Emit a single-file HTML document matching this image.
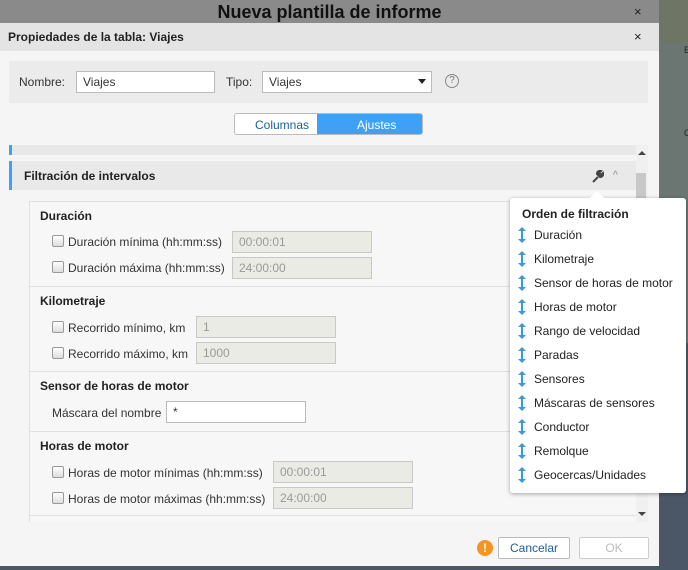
<!DOCTYPE html>
<html><head><meta charset="utf-8"><style>
*{box-sizing:border-box;margin:0;padding:0}
body{width:688px;height:570px;overflow:hidden;position:relative;font-family:"Liberation Sans",Arial,sans-serif;font-size:12px;color:#333;background:#888}
.a{position:absolute}
.inp{position:absolute;background:#fff;border:1px solid #bbb;height:22px;padding:3px 6px;font-size:12px;color:#333}
.dis{background:#ebebe6;border-color:#c8c8c8;color:#999}
.cb{position:absolute;width:12px;height:12px;border:1px solid #999;border-radius:2px;background:linear-gradient(#fff,#ddd)}
.lbl{position:absolute;font-size:12px;color:#333;white-space:nowrap}
.h{position:absolute;font-weight:bold;font-size:12px;color:#222}
.div{position:absolute;left:30px;width:606px;height:1px;background:#e0e0e0}
.it{position:absolute;left:534px;font-size:12px;color:#222}
</style></head><body>
<div class="a" style="left:0;top:0;width:659px;height:23px;background:#8a8a8a"></div>
<div class="a" style="left:0;top:2px;width:659px;text-align:center;font-weight:bold;font-size:18px;color:#111">Nueva plantilla de informe</div>
<div class="a" style="left:634px;top:4px;font-size:13px;color:#222">×</div>
<div class="a" style="left:659px;top:0;width:29px;height:43px;background:#6e7565"></div>
<div class="a" style="left:659px;top:43px;width:29px;height:300px;background:#6b7672"></div>
<div class="a" style="left:659px;top:343px;width:29px;height:227px;background:#4b5667"></div>
<div class="a" style="left:684px;top:45px;font-size:9px;color:#222">E</div>
<div class="a" style="left:684px;top:128px;font-size:9px;color:#222">C</div>

<div class="a" style="left:0;top:23px;width:659px;height:544px;background:#f5f5f5"></div>
<div class="a" style="left:0;top:566px;width:659px;height:4px;background:#4b5667"></div>
<div class="a" style="left:0;top:23px;width:659px;height:28px;background:#e4e4e4"></div>
<div class="a" style="left:8px;top:30px;font-weight:bold;font-size:12px;color:#222">Propiedades de la tabla: Viajes</div>
<div class="a" style="left:634px;top:29px;font-size:13px;color:#222">×</div>

<div class="a" style="left:9px;top:61px;width:639px;height:42px;background:#ebebeb"></div>
<div class="lbl" style="left:19px;top:75px">Nombre:</div>
<div class="inp" style="left:76px;top:71px;width:139px">Viajes</div>
<div class="lbl" style="left:226px;top:75px">Tipo:</div>
<div class="inp" style="left:262px;top:71px;width:170px">Viajes</div>
<div class="a" style="left:418px;top:79px;border-left:4px solid transparent;border-right:4px solid transparent;border-top:5px solid #222"></div>
<div class="a" style="left:445px;top:74px;width:14px;height:14px;border:1px solid #888;border-radius:50%;font-size:10px;text-align:center;line-height:12px;color:#777">?</div>

<div class="a" style="left:234px;top:113px;width:189px;height:22px;border:1px solid #bbb;border-radius:3px;background:#fff;overflow:hidden">
<div class="a" style="left:82px;top:0;width:106px;height:22px;background:#3fa1f6"></div>
<div class="a" style="left:20px;top:4px;color:#1a5f9e;font-size:12px">Columnas</div>
<div class="a" style="left:122px;top:4px;color:#fff;font-size:12px">Ajustes</div>
</div>

<div class="a" style="left:9px;top:145px;width:627px;height:10px;background:#e8e8e8;border-left:3px solid #3fa1f6"></div>
<div class="a" style="left:9px;top:161px;width:627px;height:29px;background:#e9e9e9;border-left:3px solid #3fa1f6"></div>
<div class="a" style="left:24px;top:169px;font-weight:bold;font-size:12px;color:#222">Filtración de intervalos</div>
<svg class="a" style="left:591px;top:170px" width="13" height="13" viewBox="0 0 13 13"><path d="M2 12 L7 7 M6 4 A3 3 0 0 1 10 1 L8 3 L10 5 L12 3 A3 3 0 0 1 9 7 Z" stroke="#444" stroke-width="2" fill="#444"/></svg>
<div class="a" style="left:613px;top:170px;font-size:10px;color:#888">^</div>
<div class="a" style="left:636px;top:145px;width:12px;height:377px;background:#f0f0f0"></div>
<div class="a" style="left:638px;top:151px;border-left:4px solid transparent;border-right:4px solid transparent;border-bottom:4px solid #444"></div>
<div class="a" style="left:636px;top:173px;width:10px;height:130px;background:#c8c8c8"></div>
<div class="a" style="left:638px;top:512px;border-left:4px solid transparent;border-right:4px solid transparent;border-top:4px solid #444"></div>

<div class="a" style="left:29px;top:201px;width:607px;height:321px;background:#f7f7f7;border-left:1px solid #e0e0e0;border-top:1px solid #e0e0e0"></div>
<div class="h" style="left:40px;top:209px">Duración</div>
<div class="cb" style="left:52px;top:235px"></div><div class="lbl" style="left:68px;top:235px">Duración mínima (hh:mm:ss)</div>
<div class="inp dis" style="left:232px;top:231px;width:140px">00:00:01</div>
<div class="cb" style="left:52px;top:261px"></div><div class="lbl" style="left:68px;top:261px">Duración máxima (hh:mm:ss)</div>
<div class="inp dis" style="left:232px;top:257px;width:140px">24:00:00</div>
<div class="div" style="top:286px"></div>
<div class="h" style="left:40px;top:294px">Kilometraje</div>
<div class="cb" style="left:52px;top:321px"></div><div class="lbl" style="left:68px;top:321px">Recorrido mínimo, km</div>
<div class="inp dis" style="left:196px;top:316px;width:140px">1</div>
<div class="cb" style="left:52px;top:347px"></div><div class="lbl" style="left:68px;top:347px">Recorrido máximo, km</div>
<div class="inp dis" style="left:196px;top:342px;width:140px">1000</div>
<div class="div" style="top:371px"></div>
<div class="h" style="left:40px;top:379px">Sensor de horas de motor</div>
<div class="lbl" style="left:52px;top:406px">Máscara del nombre</div>
<div class="inp" style="left:166px;top:401px;width:140px">*</div>
<div class="div" style="top:431px"></div>
<div class="h" style="left:40px;top:439px">Horas de motor</div>
<div class="cb" style="left:52px;top:466px"></div><div class="lbl" style="left:68px;top:466px">Horas de motor mínimas (hh:mm:ss)</div>
<div class="inp dis" style="left:273px;top:461px;width:140px">00:00:01</div>
<div class="cb" style="left:52px;top:492px"></div><div class="lbl" style="left:68px;top:492px">Horas de motor máximas (hh:mm:ss)</div>
<div class="inp dis" style="left:273px;top:487px;width:140px">24:00:00</div>
<div class="div" style="top:515px"></div>

<div class="a" style="left:510px;top:198px;width:176px;height:295px;background:#fff;border-radius:3px;box-shadow:0 1px 4px rgba(0,0,0,.35)"></div>
<div class="a" style="left:592px;top:193px;width:10px;height:10px;background:#fff;transform:rotate(45deg)"></div>
<div class="a" style="left:522px;top:207px;font-weight:bold;font-size:12px;color:#222">Orden de filtración</div>
<div class="it" style="top:228px">Duración</div>
<div class="it" style="top:252px">Kilometraje</div>
<div class="it" style="top:276px">Sensor de horas de motor</div>
<div class="it" style="top:300px">Horas de motor</div>
<div class="it" style="top:324px">Rango de velocidad</div>
<div class="it" style="top:348px">Paradas</div>
<div class="it" style="top:372px">Sensores</div>
<div class="it" style="top:396px">Máscaras de sensores</div>
<div class="it" style="top:420px">Conductor</div>
<div class="it" style="top:444px">Remolque</div>
<div class="it" style="top:468px">Geocercas/Unidades</div>
<svg class="a" style="left:516px;top:227px" width="12" height="264" viewBox="0 0 12 264" fill="#3a98e0" stroke="#3a98e0">
<g id="x"><path d="M6 2V14" stroke-width="2"/><path d="M2 4L6 0L10 4Z M2 12L6 16L10 12Z" stroke="none"/></g>
<use href="#x" y="24"/><use href="#x" y="48"/><use href="#x" y="72"/><use href="#x" y="96"/><use href="#x" y="120"/><use href="#x" y="144"/><use href="#x" y="168"/><use href="#x" y="192"/><use href="#x" y="216"/><use href="#x" y="240"/>
</svg>

<div class="a" style="left:477px;top:540px;width:16px;height:16px;border-radius:50%;background:#f7941d;color:#fff;font-weight:bold;font-size:12px;text-align:center;line-height:16px">!</div>
<div class="a" style="left:498px;top:537px;width:72px;height:22px;border:1px solid #bbb;border-radius:2px;background:#fff;color:#1a5f9e;text-align:center;line-height:20px">Cancelar</div>
<div class="a" style="left:579px;top:537px;width:70px;height:22px;border:1px solid #ccc;border-radius:2px;background:#fff;color:#bbb;text-align:center;line-height:20px">OK</div>
</body></html>
